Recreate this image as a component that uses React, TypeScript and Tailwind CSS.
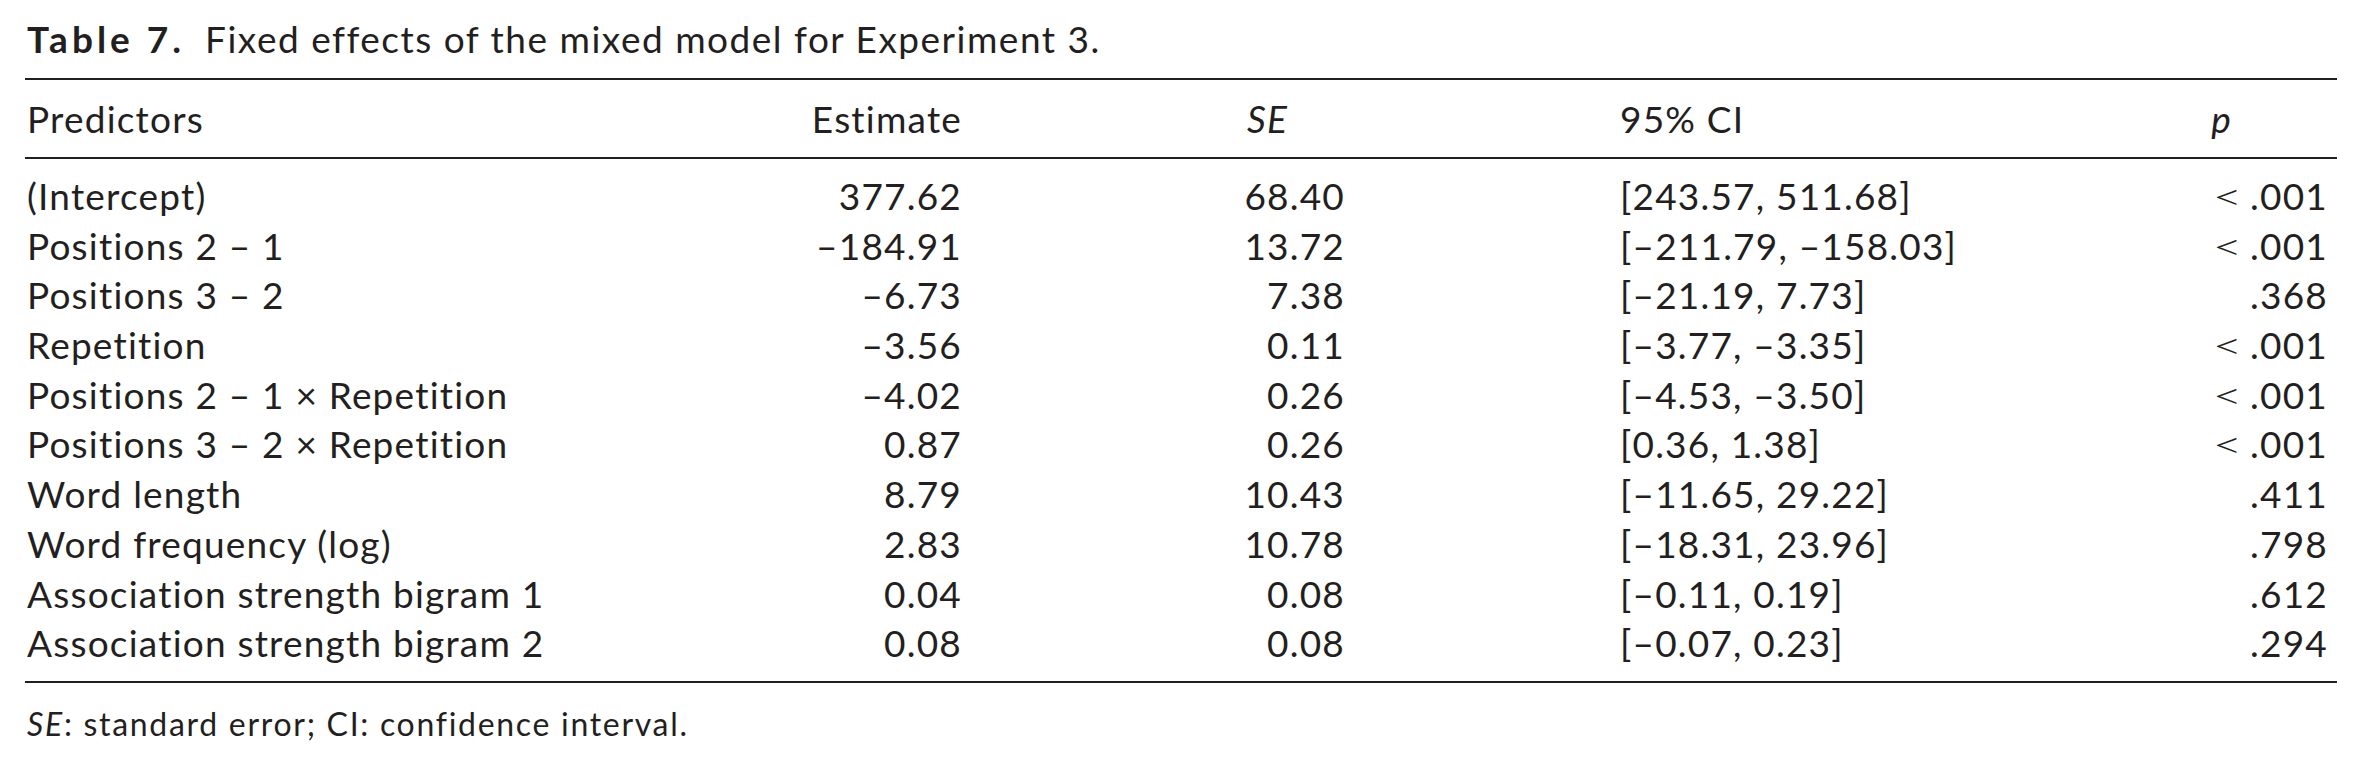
const ROWS: Array<[string, string, string, string, string]> = [
  ["(Intercept)", "377.62", "68.40", "[243.57, 511.68]", "<.001"],
  ["Positions 2 – 1", "–184.91", "13.72", "[–211.79, –158.03]", "<.001"],
  ["Positions 3 – 2", "–6.73", "7.38", "[–21.19, 7.73]", ".368"],
  ["Repetition", "–3.56", "0.11", "[–3.77, –3.35]", "<.001"],
  ["Positions 2 – 1 × Repetition", "–4.02", "0.26", "[–4.53, –3.50]", "<.001"],
  ["Positions 3 – 2 × Repetition", "0.87", "0.26", "[0.36, 1.38]", "<.001"],
  ["Word length", "8.79", "10.43", "[–11.65, 29.22]", ".411"],
  ["Word frequency (log)", "2.83", "10.78", "[–18.31, 23.96]", ".798"],
  ["Association strength bigram 1", "0.04", "0.08", "[–0.11, 0.19]", ".612"],
  ["Association strength bigram 2", "0.08", "0.08", "[–0.07, 0.23]", ".294"],
];

const GRID = "grid grid-cols-[780px_157px_383px_755px_237px]";

function PValue({ value }: { value: string }) {
  if (!value.startsWith("<")) return <>{value}</>;
  return (
    <>
      <span className="inline-block scale-x-[1.4] font-light mr-[10px]">&lt;</span>
      {value.slice(1)}
    </>
  );
}

export default function App() {
  return (
    <div className="w-[2362px] h-[768px] bg-white text-[#231f20] font-['Lato','Liberation_Sans',sans-serif] text-[37px] tracking-[1.2px] pl-[25px] pt-[14px]">
      <div className="leading-[50px] pl-[2px]">
        <span className="font-bold tracking-[4px]">Table 7.</span>
        <span className="ml-[20px] tracking-[1.5px]">Fixed effects of the mixed model for Experiment 3.</span>
      </div>
      <div className="w-[2312px] mt-[14px] border-t-2 border-b-2 border-[#231f20]">
        <div className={`${GRID} leading-[50px] pt-[14px] pb-[13px] border-b-2 border-[#231f20]`}>
          <div className="pl-[2px]">Predictors</div>
          <div className="text-right">Estimate</div>
          <div className="text-right pr-[57px] italic">SE</div>
          <div className="pl-[275px]">95% CI</div>
          <div className="text-right pr-[105px] italic">p</div>
        </div>
        <div className="pt-[12px] pb-[13px]">
          {ROWS.map(([name, est, se, ci, p]) => (
            <div key={name} className={`${GRID} h-[49.7px] leading-[50px]`}>
              <div className="pl-[2px]">{name}</div>
              <div className="text-right">{est}</div>
              <div className="text-right">{se}</div>
              <div className="pl-[275px]">{ci}</div>
              <div className="text-right pr-[9px]">
                <PValue value={p} />
              </div>
            </div>
          ))}
        </div>
      </div>
      <div className="mt-[16px] pl-[2px] text-[32px] tracking-[1.7px] leading-[50px]">
        <span className="italic">SE</span>: standard error; CI: confidence interval.
      </div>
    </div>
  );
}
